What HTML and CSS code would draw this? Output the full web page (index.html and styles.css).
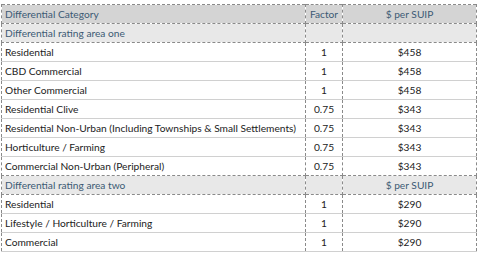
FILE: index.html
```html
<!DOCTYPE html>
<html>
<head>
<meta charset="utf-8">
<link rel="stylesheet" href="styles.css">
</head>
<body>
<table class="rates">
  <colgroup><col class="c-cat"><col class="c-fac"><col class="c-val"></colgroup>
  <tr class="head"><td>Differential Category</td><td class="num">Factor</td><td class="num">$ per SUIP</td></tr>
  <tr class="section"><td>Differential rating area one</td><td></td><td></td></tr>
  <tr><td>Residential</td><td class="num">1</td><td class="num">$458</td></tr>
  <tr><td>CBD Commercial</td><td class="num">1</td><td class="num">$458</td></tr>
  <tr><td>Other Commercial</td><td class="num">1</td><td class="num">$458</td></tr>
  <tr><td>Residential Clive</td><td class="num">0.75</td><td class="num">$343</td></tr>
  <tr><td>Residential Non-Urban (Including Townships &amp; Small Settlements)</td><td class="num">0.75</td><td class="num">$343</td></tr>
  <tr><td>Horticulture / Farming</td><td class="num">0.75</td><td class="num">$343</td></tr>
  <tr class="last"><td>Commercial Non-Urban (Peripheral)</td><td class="num">0.75</td><td class="num">$343</td></tr>
  <tr class="section"><td>Differential rating area two</td><td></td><td class="num">$ per SUIP</td></tr>
  <tr><td>Residential</td><td class="num">1</td><td class="num">$290</td></tr>
  <tr><td>Lifestyle / Horticulture / Farming</td><td class="num">1</td><td class="num">$290</td></tr>
  <tr><td>Commercial</td><td class="num">1</td><td class="num">$290</td></tr>
</table>
</body>
</html>
```
FILE: styles.css
```css
html, body {
  margin: 0;
  background: #ffffff;
}
body {
  padding: 4px 0 0 1px;
  font-family: Lato, "Liberation Sans", sans-serif;
  font-size: 10.2px;
  color: #222222;
}
.rates {
  border-collapse: collapse;
  width: 475px;
  table-layout: fixed;
  border: 1px dashed #8a8a8a;
}
.c-cat { width: 304px; }
.c-fac { width: 37px; }
.c-val { width: 134px; }
.rates td {
  height: 18px;
  padding: 0 0 0 3px;
  border-left: 1px dashed #8a8a8a;
  border-right: 1px dashed #8a8a8a;
  border-bottom: 1px solid #d0d0d0;
  white-space: nowrap;
  overflow: hidden;
  line-height: 18px;
}
.rates td.num {
  text-align: center;
  padding: 0;
}
.rates tr.head td {
  background: #d4d4d4;
  color: #3c5a74;
  border-bottom: 1px dashed #8a8a8a;
}
.rates tr.section td {
  background: #e8e8e8;
  color: #3c5a74;
  border-bottom: 1px dashed #8a8a8a;
}
.rates tr.last td {
  border-bottom: 1px dashed #8a8a8a;
}
.rates tr:last-child td {
  border-bottom: 1px solid #d0d0d0;
}
```
